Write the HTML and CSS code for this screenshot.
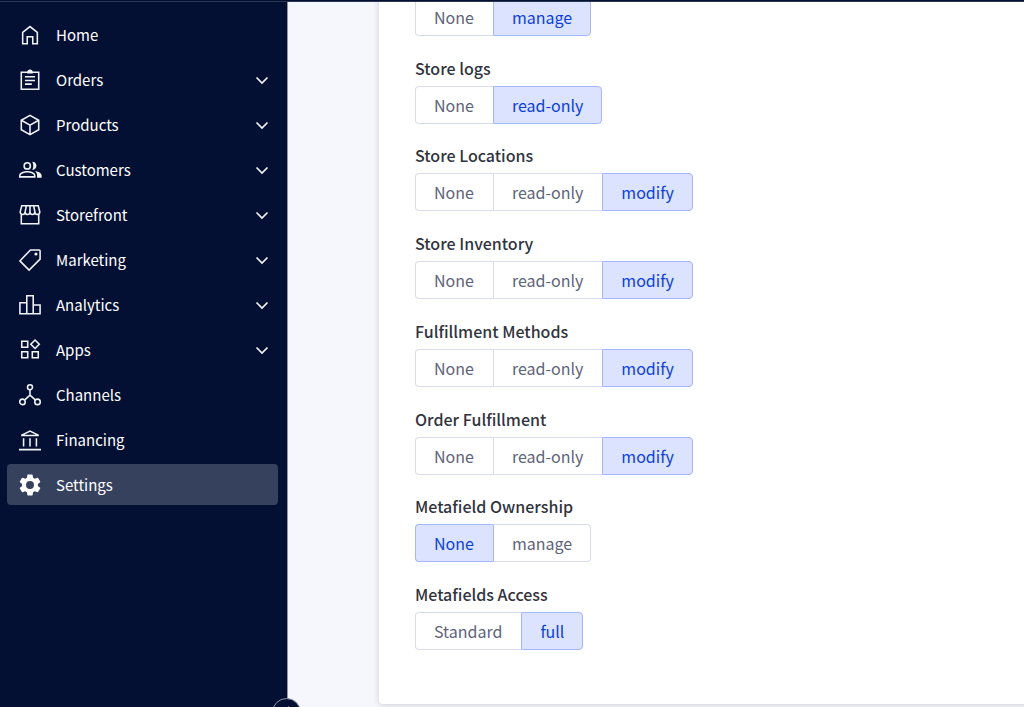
FILE: index.html
```html
<!DOCTYPE html>
<html lang="en">
<head>
<meta charset="utf-8">
<meta name="viewport" content="width=device-width, initial-scale=1">
<title>Settings</title>
<link rel="stylesheet" href="styles.css">
</head>
<body>
<div class="app">
  <header class="topbar"></header>
  <div class="body">
    <aside class="sidebar">
      <nav class="nav">
        <a class="item" href="#"><svg class="icon" viewBox="0 0 24 24"><path d="M4 21.500V9.200L12 2.800l8 6.400v12.300h-5v-7.500H9v7.500z"/></svg><span class="name">Home</span></a>
        <a class="item" href="#"><svg class="icon" viewBox="0 0 24 24"><path d="M2.500 3.500h19v18.500h-19z"/><path class="fill" d="M9 3.500a3 3 0 0 1 6 0v1.500H9z"/><path d="M6.500 8.500h11M6.500 12.500h11M6.500 16.500h7.500"/></svg><span class="name">Orders</span><svg class="chevron" viewBox="0 0 16 16"><path d="M2.500 5.500 8 11l5.500-5.500"/></svg></a>
        <a class="item" href="#"><svg class="icon" viewBox="0 0 24 24"><path d="M12 1.500l9.500 5.300v10.400L12 22.500l-9.500-5.300V6.800zM2.500 6.800l9.500 5.400 9.500-5.400M12 12.200v10.300"/></svg><span class="name">Products</span><svg class="chevron" viewBox="0 0 16 16"><path d="M2.500 5.500 8 11l5.500-5.500"/></svg></a>
        <a class="item" href="#"><svg class="icon" viewBox="0 0 24 24"><circle cx="9" cy="7.500" r="3.400"/><path d="M.8 19.500v-1.300c0-2.700 4.700-4.200 8.200-4.200s8.200 1.500 8.200 4.200v1.300z"/><path class="fill" d="M14.500 3.100c6 0 6 8.800 0 8.800 1.500-2.600 1.500-6.200 0-8.800zM17.500 13.200c4 .7 7.200 2.300 7.200 5v2.300h-5v-2.300c0-2-.7-3.700-2.200-5z"/></svg><span class="name">Customers</span><svg class="chevron" viewBox="0 0 16 16"><path d="M2.500 5.500 8 11l5.500-5.500"/></svg></a>
        <a class="item" href="#"><svg class="icon" viewBox="0 0 24 24"><path d="M2.500 11v10.500h19V11M3 2h18l1.700 6.500c0 4-5.400 4-5.400 0 0 4-5.300 4-5.300 0 0 4-5.300 4-5.300 0 0 4-5.400 4-5.400 0zM8 2 6.700 8.500M12 2v6.500M16 2l1.300 6.500"/></svg><span class="name">Storefront</span><svg class="chevron" viewBox="0 0 16 16"><path d="M2.500 5.500 8 11l5.500-5.500"/></svg></a>
        <a class="item" href="#"><svg class="icon" viewBox="0 0 24 24"><path d="M12.500 1h9.500a1 1 0 0 1 1 1v9L11 23 1 13z"/><circle class="fill" cx="18.500" cy="5.500" r="1.700"/></svg><span class="name">Marketing</span><svg class="chevron" viewBox="0 0 16 16"><path d="M2.500 5.500 8 11l5.500-5.500"/></svg></a>
        <a class="item" href="#"><svg class="icon" viewBox="0 0 24 24"><path d="M1 9.500h7.500v12H1zM8.500 2h7v19.500h-7zM15.500 12H23v9.500h-7.500z"/></svg><span class="name">Analytics</span><svg class="chevron" viewBox="0 0 16 16"><path d="M2.500 5.500 8 11l5.500-5.500"/></svg></a>
        <a class="item" href="#"><svg class="icon" viewBox="0 0 24 24"><path d="M3 2.500h6.500V9H3zM3 14h6.500v6.500H3zM14.500 14H21v6.500h-6.500zM17.500 1.100l4.600 4.600-4.600 4.600-4.600-4.600z"/></svg><span class="name">Apps</span><svg class="chevron" viewBox="0 0 16 16"><path d="M2.500 5.500 8 11l5.500-5.500"/></svg></a>
        <a class="item" href="#"><svg class="icon" viewBox="0 0 24 24"><circle cx="12" cy="3.500" r="2.700"/><circle cx="3.800" cy="19.500" r="3"/><circle cx="20.200" cy="19.500" r="3"/><path d="M12 6.200v6l-6 5.300M12 12.200l6 5.300"/></svg><span class="name">Channels</span></a>
        <a class="item" href="#"><svg class="icon" viewBox="0 0 24 24"><path d="M2.500 7 12 2.200 21.500 7zM5 10v9M12 10v9M19 10v9M0 22.500h24"/></svg><span class="name">Financing</span></a>
        <a class="item current" href="#" aria-current="page"><svg class="icon" viewBox="2 2 20 20"><path class="solid" d="M19.140 12.940c.04-.3.060-.61.060-.94 0-.32-.02-.64-.07-.94l2.030-1.580c.18-.14.230-.41.120-.61l-1.920-3.320c-.12-.22-.37-.29-.59-.22l-2.390.96c-.5-.38-1.030-.7-1.620-.94l-.36-2.540c-.04-.24-.24-.41-.48-.41h-3.840c-.24 0-.43.170-.47.410l-.36 2.540c-.59.240-1.130.57-1.620.94l-2.390-.96c-.22-.08-.47 0-.59.220L2.740 8.870c-.12.210-.08.470.12.610l2.030 1.580c-.05.300-.09.630-.09.940s.02.640.07.940l-2.030 1.580c-.18.140-.23.410-.12.610l1.920 3.320c.12.220.37.290.59.220l2.390-.96c.5.380 1.030.7 1.620.94l.36 2.540c.05.240.24.410.48.410h3.840c.24 0 .44-.17.470-.41l.36-2.540c.59-.24 1.130-.56 1.620-.94l2.390.96c.22.080.47 0 .59-.22l1.920-3.320c.12-.22.070-.47-.12-.61zM12 15.600a3.600 3.600 0 1 1 0-7.200 3.600 3.600 0 0 1 0 7.200z"/></svg><span class="name">Settings</span></a>
      </nav>
      <button class="collapse" type="button" aria-label="Collapse sidebar"><svg class="arrow" viewBox="0 0 12 12"><path d="M8 1 3 6l5 5"/></svg></button>
    </aside>
    <main class="main">
      <form class="card">
        <fieldset class="scope">
          <legend class="label">&nbsp;</legend>
          <div class="group"><button class="option" type="button">None</button><button class="option selected" type="button" aria-pressed="true">manage</button></div>
        </fieldset>
        <fieldset class="scope">
          <legend class="label">Store logs</legend>
          <div class="group"><button class="option" type="button">None</button><button class="option selected" type="button" aria-pressed="true">read-only</button></div>
        </fieldset>
        <fieldset class="scope">
          <legend class="label">Store Locations</legend>
          <div class="group"><button class="option" type="button">None</button><button class="option" type="button">read-only</button><button class="option selected" type="button" aria-pressed="true">modify</button></div>
        </fieldset>
        <fieldset class="scope">
          <legend class="label">Store Inventory</legend>
          <div class="group"><button class="option" type="button">None</button><button class="option" type="button">read-only</button><button class="option selected" type="button" aria-pressed="true">modify</button></div>
        </fieldset>
        <fieldset class="scope">
          <legend class="label">Fulfillment Methods</legend>
          <div class="group"><button class="option" type="button">None</button><button class="option" type="button">read-only</button><button class="option selected" type="button" aria-pressed="true">modify</button></div>
        </fieldset>
        <fieldset class="scope">
          <legend class="label">Order Fulfillment</legend>
          <div class="group"><button class="option" type="button">None</button><button class="option" type="button">read-only</button><button class="option selected" type="button" aria-pressed="true">modify</button></div>
        </fieldset>
        <fieldset class="scope">
          <legend class="label">Metafield Ownership</legend>
          <div class="group"><button class="option selected" type="button" aria-pressed="true">None</button><button class="option" type="button">manage</button></div>
        </fieldset>
        <fieldset class="scope">
          <legend class="label">Metafields Access</legend>
          <div class="group"><button class="option" type="button">Standard</button><button class="option selected" type="button" aria-pressed="true">full</button></div>
        </fieldset>
      </form>
    </main>
  </div>
</div>
</body>
</html>
```
FILE: styles.css
```css
* { box-sizing: border-box; }
body {
  margin: 0;
  font-family: "Noto Sans CJK SC", "Noto Sans", sans-serif;
  font-size: 16px;
  line-height: 24px;
}
.app {
  display: flex;
  flex-direction: column;
  height: 100vh;
  overflow: hidden;
  background: #f6f7fc;
}
.topbar {
  flex: none;
  height: 2px;
  background: #031033;
  border-bottom: 1px solid #2b3652;
  position: relative;
  z-index: 2;
}
.body { display: flex; flex: 1; min-height: 0; }
.sidebar {
  position: relative;
  flex: none;
  width: 288px;
  padding: 12px 9px 0 7px;
  background: #031033;
  border-right: 1px solid #8f95a5;
}
.nav { display: flex; flex-direction: column; gap: 4px; }
.item {
  display: flex;
  align-items: center;
  height: 41px;
  padding: 0 8px 0 12px;
  border-radius: 4px;
  color: #fff;
  font-size: 15px;
  font-weight: 400;
  text-decoration: none;
}
.current { background: #36415d; }
.icon {
  width: 22px;
  height: 22px;
  margin-right: 15px;
  overflow: visible;
  fill: none;
  stroke: #f2f3f7;
  stroke-width: 1.7;
}
.name { flex: 1; }
.fill { fill: #f2f3f7; stroke: none; }
.solid { fill: #fff; stroke: none; }
.chevron { width: 16px; height: 16px; fill: none; stroke: #f2f3f7; stroke-width: 1.7; }
.collapse {
  position: absolute;
  right: -14px;
  bottom: -20px;
  display: grid;
  place-items: center;
  width: 29px;
  height: 29px;
  padding: 0;
  border: 1px solid #8f95a5;
  border-radius: 50%;
  background: #031033;
}
.arrow { width: 14px; height: 14px; fill: none; stroke: #fff; stroke-width: 2; }
.main { display: flex; flex: 1; min-width: 0; padding-left: 91px; overflow: hidden; }
.card {
  display: flex;
  flex: 1;
  flex-direction: column;
  justify-content: space-between;
  margin: -34px -8px 3px 0;
  padding: 0 36px 54px;
  border-radius: 4px;
  background: #fff;
  box-shadow: 0 1px 6px rgba(49, 52, 64, 0.2);
}
.scope { min-width: 0; margin: 0; padding: 0; border: 0; }
.label {
  padding: 0 0 6px;
  color: #313440;
  font-weight: 500;
}
.group { display: flex; }
.option {
  height: 38px;
  padding: 0 18px;
  border: 1px solid #d9dce9;
  background: #fff;
  color: #5e637a;
  font: inherit;
}
.option:first-child { border-radius: 4px 0 0 4px; }
.option:last-child { border-radius: 0 4px 4px 0; }
.option:not(:last-child) { padding-right: 19px; border-right: 0; }
.option.selected {
  border-color: #a5b7ff;
  background: #dbe3fe;
  color: #0d3fd8;
}
.selected + .option { border-left-color: #a5b7ff; }
```
